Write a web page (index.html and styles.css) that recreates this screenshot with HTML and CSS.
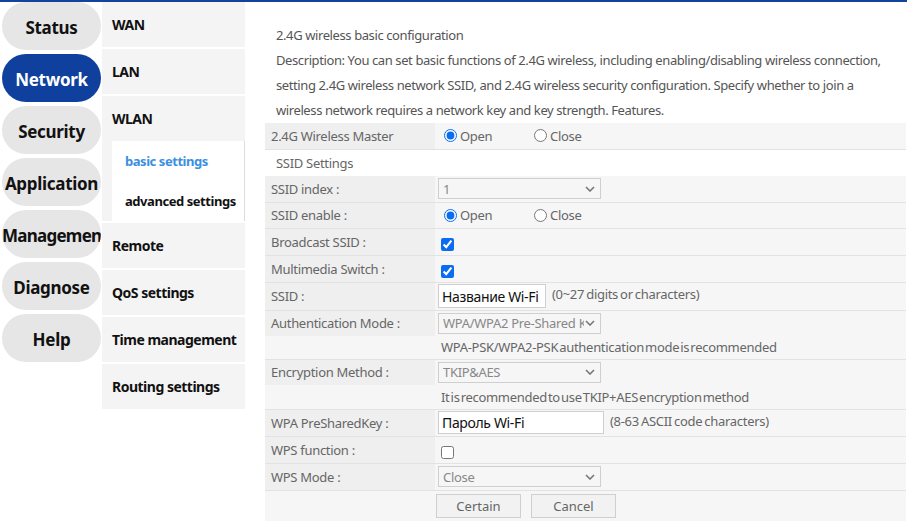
FILE: index.html
```html
<!DOCTYPE html>
<html>
<head>
<meta charset="utf-8">
<link rel="stylesheet" href="styles.css">
</head>
<body>
<div class="topbar"></div>
<div class="layout">
  <nav class="mainnav">
    <div class="pill">Status</div>
    <div class="pill active">Network</div>
    <div class="pill">Security</div>
    <div class="pill">Application</div>
    <div class="pill tight">Managemen</div>
    <div class="pill">Diagnose</div>
    <div class="pill">Help</div>
  </nav>
  <nav class="subnav">
    <div class="item">WAN</div>
    <div class="item">LAN</div>
    <div class="item group">
      <div class="group-title">WLAN</div>
      <div class="submenu">
        <div class="subitem current">basic settings</div>
        <div class="subitem">advanced settings</div>
      </div>
    </div>
    <div class="item">Remote</div>
    <div class="item">QoS settings</div>
    <div class="item">Time management</div>
    <div class="item">Routing settings</div>
  </nav>
  <main class="content">
    <div class="intro">
      <p class="title">2.4G wireless basic configuration</p>
      <p class="desc">Description: You can set basic functions of 2.4G wireless, including enabling/disabling wireless connection, setting 2.4G wireless network SSID, and 2.4G wireless security configuration. Specify whether to join a wireless network requires a network key and key strength. Features.</p>
    </div>
    <table class="form">
      <tr class="row h26">
        <td class="lbl">2.4G Wireless Master</td>
        <td class="val">
          <div class="radios">
            <label class="opt"><input type="radio" name="m" checked>Open</label>
            <label class="opt"><input type="radio" name="m">Close</label>
          </div>
        </td>
      </tr>
      <tr class="section"><td colspan="2">SSID Settings</td></tr>
      <tr class="row h26">
        <td class="lbl">SSID index :</td>
        <td class="val"><div class="select"><span class="sel-text">1</span><svg class="chev" viewBox="0 0 10 6" width="10" height="6"><path d="M1 1l4 4 4-4" fill="none" stroke="#777" stroke-width="1.6"/></svg></div></td>
      </tr>
      <tr class="row h26">
        <td class="lbl">SSID enable :</td>
        <td class="val">
          <div class="radios">
            <label class="opt"><input type="radio" name="e" checked>Open</label>
            <label class="opt"><input type="radio" name="e">Close</label>
          </div>
        </td>
      </tr>
      <tr class="row">
        <td class="lbl">Broadcast SSID :</td>
        <td class="val"><input class="chk" type="checkbox" checked></td>
      </tr>
      <tr class="row">
        <td class="lbl">Multimedia Switch :</td>
        <td class="val"><input class="chk" type="checkbox" checked></td>
      </tr>
      <tr class="row tall">
        <td class="lbl">SSID :</td>
        <td class="val"><input class="text ssid" type="text" value="Название Wi-Fi"><span class="note">(0~27 digits or characters)</span></td>
      </tr>
      <tr class="row nob">
        <td class="lbl">Authentication Mode :</td>
        <td class="val"><div class="select"><span class="sel-text">WPA/WPA2 Pre-Shared Key</span><svg class="chev" viewBox="0 0 10 6" width="10" height="6"><path d="M1 1l4 4 4-4" fill="none" stroke="#777" stroke-width="1.6"/></svg></div></td>
      </tr>
      <tr class="row hint h23">
        <td class="lbl blank"></td>
        <td class="val"><span class="hinttext">WPA-PSK/WPA2-PSK authentication mode is recommended</span></td>
      </tr>
      <tr class="row nob">
        <td class="lbl">Encryption Method :</td>
        <td class="val"><div class="select"><span class="sel-text">TKIP&amp;AES</span><svg class="chev" viewBox="0 0 10 6" width="10" height="6"><path d="M1 1l4 4 4-4" fill="none" stroke="#777" stroke-width="1.6"/></svg></div></td>
      </tr>
      <tr class="row hint">
        <td class="lbl blank"></td>
        <td class="val"><span class="hinttext">It is recommended to use TKIP+AES encryption method</span></td>
      </tr>
      <tr class="row">
        <td class="lbl">WPA PreSharedKey :</td>
        <td class="val"><input class="text psk" type="text" value="Пароль Wi-Fi"><span class="note">(8-63 ASCII code characters)</span></td>
      </tr>
      <tr class="row">
        <td class="lbl">WPS function :</td>
        <td class="val"><input class="chk" type="checkbox"></td>
      </tr>
      <tr class="row">
        <td class="lbl">WPS Mode :</td>
        <td class="val"><div class="select"><span class="sel-text">Close</span><svg class="chev" viewBox="0 0 10 6" width="10" height="6"><path d="M1 1l4 4 4-4" fill="none" stroke="#777" stroke-width="1.6"/></svg></div></td>
      </tr>
      <tr class="row buttons">
        <td class="lbl blank"></td>
        <td class="val"><button class="btn">Certain</button><button class="btn">Cancel</button></td>
      </tr>
    </table>
  </main>
</div>
</body>
</html>
```
FILE: styles.css
```css
* { box-sizing: border-box; }
html, body { margin: 0; padding: 0; background: #fff; }
body { font-family: "Noto Sans", "Open Sans", sans-serif; color: #555; }

.topbar { height: 2px; background: #12449e; }

.layout { display: flex; align-items: flex-start; }

.mainnav {
  width: 102px;
  padding-left: 2px;
  display: flex;
  flex-direction: column;
  gap: 4px;
}
.pill {
  width: 99px;
  height: 48px;
  border-radius: 24px;
  background: #e6e6e6;
  color: #111;
  font-weight: 700;
  font-size: 17px;
  letter-spacing: -0.3px;
  line-height: 52px;
  text-align: center;
  white-space: nowrap;
  overflow: hidden;
}
.pill.tight { letter-spacing: -0.75px; }
.pill.active { background: #0f409d; color: #fff; }

.subnav {
  width: 143px;
  display: flex;
  flex-direction: column;
  gap: 2px;
}
.item {
  background: #f4f4f4;
  min-height: 45px;
  display: flex;
  align-items: center;
  padding-left: 10px;
  font-weight: 700;
  font-size: 14px;
  letter-spacing: -0.5px;
  color: #111;
}
.item.group { display: block; padding-left: 10px; }
.group-title { height: 45px; display: flex; align-items: center; }
.submenu {
  background: #fff;
  border-right: 1px solid #dcdcdc;
  padding-left: 13px;
}
.subitem {
  height: 40px;
  display: flex;
  align-items: center;
  font-size: 13px;
  font-weight: 700;
  letter-spacing: -0.45px;
  color: #111;
}
.subitem.current { color: #3b8fe2; }

.content { margin-left: 20px; width: 641px; }
.intro { padding: 21px 12px 0 11px; font-size: 13px; line-height: 25px; letter-spacing: -0.4px; color: #555; }
.intro p { margin: 0; }

.form { width: 100%; border-collapse: collapse; font-size: 13px; letter-spacing: -0.3px; color: #666; }
.form td { padding: 0; }
.row td { height: 27px; border-bottom: 1px solid #e2e2e2; background: #f6f6f6; vertical-align: middle; }
.row.h26 td { height: 26px; }
.row.tall td { height: 28px; }
.row.nob td { border-bottom: none; height: 26px; }
.row.hint td { height: 24px; }
.row.hint.h23 td { height: 23px; }
.row .lbl { width: 170px; padding-left: 6px; background: #efefef; }
.row .lbl.blank { background: #f6f6f6; }
.row .val { padding-left: 3px; }
.row.buttons td { height: 31px; border-bottom: none; }
.row.buttons .val { padding-left: 1px; }
.section td { height: 27px; padding-left: 11px; background: #fff; }

.radios { display: flex; align-items: center; }
.opt { display: inline-flex; align-items: center; width: 90px; }
.opt input { margin: 0 3px 0 6px; width: 13px; height: 13px; accent-color: #0a6cf0; }
.chk { margin: 3px 0 0 3px; width: 13px; height: 13px; accent-color: #0a6cf0; vertical-align: middle; }

.select {
  width: 163px;
  height: 21px;
  border: 1px solid #cfcfcf;
  background: #f6f6f6;
  display: flex;
  align-items: center;
  justify-content: space-between;
  padding: 0 5px 0 4px;
  color: #888;
}
.sel-text { white-space: nowrap; overflow: hidden; flex: 1; min-width: 0; }
.chev { flex: none; margin-left: 1px; }

.text {
  height: 24px;
  border: 1px solid #cfcfcf;
  background: #fff;
  font-family: "Noto Sans", sans-serif;
  font-size: 14px;
  letter-spacing: -0.35px;
  color: #111;
  padding: 0 3px;
  vertical-align: middle;
}
.ssid { width: 108px; }
.psk { width: 166px; height: 23px; }
.note { margin-left: 6px; letter-spacing: -0.3px; word-spacing: -1px; }

.hinttext { display: inline-block; padding-left: 3px; letter-spacing: -0.3px; word-spacing: -2px; }

.btn {
  width: 85px;
  height: 24px;
  border: 1px solid #cfcfcf;
  background: #f2f2f2;
  color: #666;
  font-family: "Noto Sans", sans-serif;
  font-size: 13px;
  margin: 0 10px 0 0;
  vertical-align: middle;
}
```
